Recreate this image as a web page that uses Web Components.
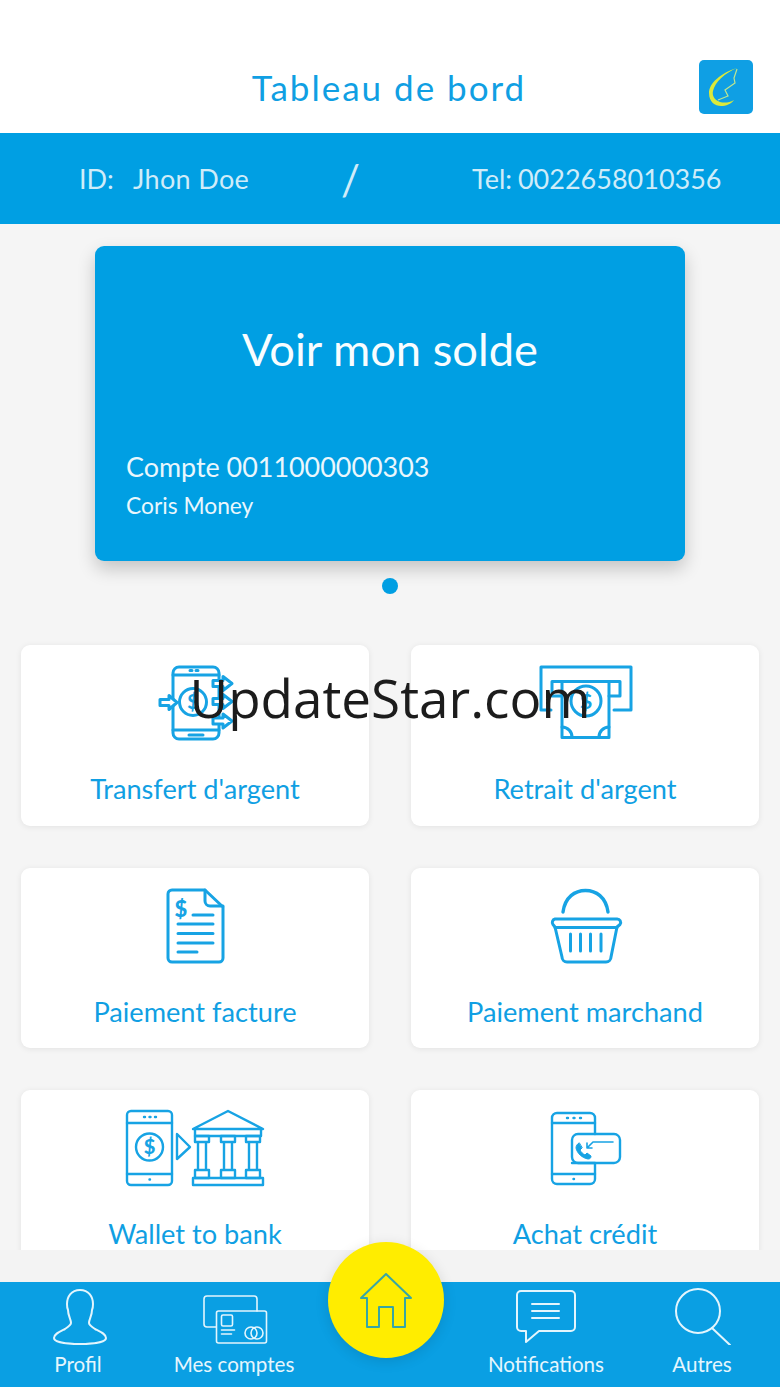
<!DOCTYPE html>
<html lang="fr">
<head>
<meta charset="utf-8">
<title>Tableau de bord</title>
<style>
html,body{margin:0;padding:0;background:#f5f5f5;}
body{font-family:Lato,"Open Sans",sans-serif;}
svg.ic{display:block;width:160px;height:80px;fill:none;stroke:#17a3e4;stroke-width:3;stroke-linecap:round;stroke-linejoin:round;}
svg.ic text{font-family:Lato,sans-serif;font-weight:900;text-anchor:middle;fill:#17a3e4;stroke:none;}
svg.tb{display:block;fill:none;stroke:#e3f5fd;stroke-width:2;stroke-linecap:round;stroke-linejoin:round;}
</style>
</head>
<body>
<app-shell>
  <app-header title="Tableau de bord"></app-header>
  <id-band name="Jhon Doe" tel="0022658010356"></id-band>
  <main-area>
    <balance-card account="Compte 0011000000303" wallet="Coris Money" heading="Voir mon solde"></balance-card>
    <action-grid>
      <action-tile label="Transfert d'argent">
        <svg class="ic" viewBox="0 0 160 80">
          <rect x="58" y="5" width="46" height="72" rx="6"/>
          <path d="M58 13H104M58 68H104M75 8.500h2M81 8.500h2M74 73h14"/>
          <circle cx="78" cy="40" r="13.500"/>
          <text x="78" y="47" font-size="20">$</text>
          <path d="M45 37.500h9v-4l8 7-8 7v-4h-9z" fill="#fff"/>
          <path d="M98 18.500h10v-4l9 7-9 7v-4H98zM98 36.500h10v-4l9 7-9 7v-4H98zM98 56h10v-4l9 7-9 7v-4H98z" fill="#fff"/>
        </svg>
      </action-tile>
      <action-tile label="Retrait d'argent">
        <svg class="ic" viewBox="0 0 160 80">
          <path d="M46 48H36V5h90v43h-17"/>
          <path d="M57 34H47V19.500h68V34h-11"/>
          <path d="M57 19.500h47v56H57z"/>
          <circle cx="81" cy="39" r="15"/>
          <text x="81" y="46.500" font-size="21">$</text>
          <path d="M57 65a10 10 0 0 1 10 10.500M104 65a10 10 0 0 0-10 10.500"/>
        </svg>
      </action-tile>
      <action-tile label="Paiement facture">
        <svg class="ic" viewBox="0 0 160 80">
          <path d="M57 5h33l18 17v51a4 4 0 0 1-4 4H57a4 4 0 0 1-4-4V9a4 4 0 0 1 4-4z"/>
          <path d="M90 5v11a5 5 0 0 0 5 5h13"/>
          <path d="M78 30h20M63 39h35M63 48.500h35M63 58h35M63 67h19"/>
          <text x="66" y="32" font-size="22">$</text>
        </svg>
      </action-tile>
      <action-tile label="Paiement marchand">
        <svg class="ic" viewBox="0 0 160 80">
          <path d="M58 27C60 12 70 5.500 80.500 5.500S101 12 103 27" stroke-width="3.400"/>
          <path d="M50 34h62a3.500 3.500 0 0 1 3 5.500l-3 2.500-6 30a5 5 0 0 1-5 5H62a5 5 0 0 1-5-5l-7-30-2-2.500A3.500 3.500 0 0 1 50 34z"/>
          <path d="M50 42.500h62M65.500 49v17M75.500 49v17M85.500 49v17M96 49v17"/>
        </svg>
      </action-tile>
      <action-tile label="Wallet to bank">
        <svg class="ic" viewBox="0 0 160 80" style="stroke-width:2.400">
          <rect x="12" y="4" width="45" height="74" rx="4"/>
          <path d="M12 16H57M12 67H57M29 10h1M34.500 10h1M40 10h1M34.500 72.500h.5"/>
          <circle cx="34.500" cy="40" r="13.500"/>
          <text x="34.500" y="47" font-size="20">$</text>
          <path d="M62 27l13 13-13 12z"/>
          <path d="M78 22L113 4l35 18zM80 22v7h66v-7"/>
          <path d="M80 29h14v6H80zM83 35h8v28h-8zM80 63h14v8H80z"/>
          <path d="M106 29h14v6h-14zM109 35h8v28h-8zM106 63h14v8h-14z"/>
          <path d="M131 29h14v6h-14zM134 35h8v28h-8zM131 63h14v8h-14z"/>
          <path d="M78 71h70v7H78z"/>
        </svg>
      </action-tile>
      <action-tile label="Achat crédit">
        <svg class="ic" viewBox="0 0 160 80" style="stroke-width:2.400">
          <path d="M67 56H90V72a5 5 0 0 1-5 5H52a5 5 0 0 1-5-5V11a5 5 0 0 1 5-5h33a5 5 0 0 1 5 5V27"/>
          <path d="M47 16H90M47 67H90M62 11h1M68.500 11h1M75 11h1M68.500 72h.5"/>
          <rect x="67" y="27" width="48" height="29" rx="6"/>
          <path d="M74 36c-2 1-3 3-3 5 1 5 6 10 12 11 2 0 3-1 3-3l-4-3-2 2c-2-1-4-3-5-5l2-2z" fill="#17a3e4" stroke-width="1"/>
          <path d="M82 41l6-6h20M82 36v5h5" stroke-width="1.600"/>
        </svg>
      </action-tile>
    </action-grid>
  </main-area>
  <div style="height:32px;background:#f3f3f3"></div>
  <tab-bar>
    <tab-item label="Profil">
      <svg class="tb" width="60" height="58" viewBox="0 0 60 58" style="margin-left:4px">
        <path d="M30 3c-9 0-13 7-13 14 0 3 .5 5 1 6 0 6 3 9 3 13 0 2-3 4-6 6-6 3-11 5-11 9 0 4 12 6 26 6s26-2 26-6c0-4-5-6-11-9-3-2-6-4-6-6 0-4 3-7 3-13 .5-1 1-3 1-6 0-7-4-14-13-14z"/>
      </svg>
    </tab-item>
    <tab-item label="Mes comptes">
      <svg class="tb" width="66" height="52" viewBox="0 0 66 52" style="stroke-width:1.600;margin-left:2px">
        <path d="M14 34H5a3 3 0 0 1-3-3V6a3 3 0 0 1 3-3h47a3 3 0 0 1 3 3v12"/>
        <rect x="14.500" y="18" width="50" height="32" rx="2"/>
        <rect x="19.500" y="22" width="11" height="11" rx="1.500"/>
        <path d="M19.500 37h13M19.500 41h10"/>
        <circle cx="49" cy="40" r="6"/><circle cx="55" cy="40" r="6"/>
      </svg>
    </tab-item>
    <div></div>
    <tab-item label="Notifications">
      <svg class="tb" width="62" height="56" viewBox="0 0 62 56">
        <path d="M6 2h50a4 4 0 0 1 4 4v32a4 4 0 0 1-4 4H24L11 53V42H6a4 4 0 0 1-4-4V6a4 4 0 0 1 4-4z"/>
        <path d="M17 15h27M17 22h27M17 29h27"/>
      </svg>
    </tab-item>
    <tab-item label="Autres">
      <svg class="tb" width="62" height="58" viewBox="0 0 62 58">
        <circle cx="27" cy="24" r="22"/>
        <path d="M41 41l18 17" />
      </svg>
    </tab-item>
  </tab-bar>
  <home-button></home-button>
  <water-mark text="UpdateStar.com"></water-mark>
</app-shell>

<script>
(function(){
function shadow(el,html){
    let temp=document.createElement("template");
    temp.innerHTML=html;
    el.attachShadow({mode:"open"});
    el.shadowRoot.appendChild(temp.content.cloneNode(true));
}

class AppShell extends HTMLElement{
    constructor(){
        super();
        shadow(this,`<style>
        :host{display:flex;flex-direction:column;position:relative;width:780px;height:1387px;overflow:hidden;background:#f5f5f5;font-family:Lato,sans-serif;}
        </style><slot></slot>`);
    }
}

class AppHeader extends HTMLElement{
    constructor(){
        super();
        shadow(this,`<style>
        :host{display:flex;align-items:flex-end;justify-content:center;position:relative;flex:none;height:133px;box-sizing:border-box;background:#fff;}
        h1{margin:0 2px 25px 0;font:400 35px/42px Lato,sans-serif;letter-spacing:2px;color:#109fe3;}
        svg{position:absolute;left:699px;top:60px;}
        </style>
        <h1>${this.getAttribute("title")}</h1>
        <svg width="54" height="54" viewBox="0 0 54 54">
          <rect width="54" height="54" rx="5" fill="#0f9fe4"/>
          <path d="M38 8C22 13 10 23 10 33c0 9 6 13 12 13 5 0 10-2 13-6-5 3-10 3-14 2-6-2-8-7-7-11C16 22 26 13 38 8z" fill="#dbe93a"/>
          <path d="M38 9l-3 9 1 5-10 7 3 6-10 4" fill="none" stroke="#bfe58f" stroke-width="1.200"/>
        </svg>`);
    }
}

class IdBand extends HTMLElement{
    constructor(){
        super();
        shadow(this,`<style>
        :host{display:flex;align-items:center;flex:none;height:91px;padding:0 0 0 79px;box-sizing:border-box;background:#009fe3;color:#cfecf9;font:400 27px/32px Lato,sans-serif;}
        .id{width:54px;}
        .name{width:208px;letter-spacing:.35px;}
        .sl{width:131px;font-size:42px;line-height:40px;font-weight:400;}
        .tel{word-spacing:-1px;}
        </style>
        <span class="id">ID:</span><span class="name">${this.getAttribute("name")}</span><span class="sl">/</span><span class="tel">Tel: ${this.getAttribute("tel")}</span>`);
    }
}

class MainArea extends HTMLElement{
    constructor(){
        super();
        shadow(this,`<style>
        :host{display:block;flex:none;height:1026px;overflow:hidden;box-sizing:border-box;padding-top:22px;background:#f5f5f5;}
        </style><slot></slot>`);
    }
}

class BalanceCard extends HTMLElement{
    constructor(){
        super();
        shadow(this,`<style>
        :host{display:block;}
        .card{display:flex;flex-direction:column;width:590px;height:315px;margin:0 auto;box-sizing:border-box;padding:75px 31px 0;background:#009fe3;border-radius:9px;color:#fff;box-shadow:0 8px 18px rgba(0,0,0,.2);}
        h2{margin:0;font:400 45.300px/56px Lato,sans-serif;text-align:center;color:#f8fdff;}
        .acc{margin-top:72px;font-size:26.900px;line-height:36px;color:#eaf7fd;}
        .wal{margin-top:5px;font-size:22.800px;line-height:30px;color:#eaf7fd;}
        .dot{width:16px;height:16px;margin:17px auto 0;border-radius:50%;background:#009fe3;}
        </style>
        <div class="card">
          <h2>${this.getAttribute("heading")}</h2>
          <div class="acc">${this.getAttribute("account")}</div>
          <div class="wal">${this.getAttribute("wallet")}</div>
        </div>
        <div class="dot"></div>`);
    }
}

class ActionGrid extends HTMLElement{
    constructor(){
        super();
        shadow(this,`<style>
        :host{display:grid;grid-template-columns:348px 348px;column-gap:42px;row-gap:42px;padding:51px 21px 0;}
        </style><slot></slot>`);
    }
}

class ActionTile extends HTMLElement{
    constructor(){
        super();
        shadow(this,`<style>
        :host{display:flex;flex-direction:column;align-items:center;height:180.500px;box-sizing:border-box;padding-top:17px;background:#fff;border-radius:9px;box-shadow:0 1px 6px rgba(0,0,0,.08);}
        .t{margin-top:29px;font:400 27.200px/36px Lato,sans-serif;color:#109fe3;}
        </style>
        <slot></slot><div class="t">${this.getAttribute("label")}</div>`);
    }
}

class TabBar extends HTMLElement{
    constructor(){
        super();
        shadow(this,`<style>
        :host{display:grid;grid-template-columns:repeat(5,156px);flex:none;height:105px;background:#0a9fe3;}
        </style><slot></slot>`);
    }
}

class TabItem extends HTMLElement{
    constructor(){
        super();
        shadow(this,`<style>
        :host{display:flex;flex-direction:column;align-items:center;position:relative;}
        .i{display:flex;align-items:flex-end;justify-content:center;height:63px;}
        .l{font:400 20.600px/26px Lato,sans-serif;color:#e6f6fd;margin-top:6px;}
        </style>
        <div class="i"><slot></slot></div><div class="l">${this.getAttribute("label")}</div>`);
    }
}

class HomeButton extends HTMLElement{
    constructor(){
        super();
        shadow(this,`<style>
        :host{display:flex;align-items:center;justify-content:center;position:absolute;left:327.500px;top:1242px;width:116px;height:116px;border-radius:50%;background:#ffed00;box-shadow:0 3px 14px rgba(0,0,0,.12);}
        </style>
        <svg width="56" height="58" viewBox="0 0 56 58" fill="none" stroke="#38a6a5" stroke-width="2" stroke-linejoin="round">
          <path d="M28 3L3 27h6v29h12V36h14v20h12V27h6z"/>
        </svg>`);
    }
}

class WaterMark extends HTMLElement{
    constructor(){
        super();
        shadow(this,`<style>
        :host{display:block;position:absolute;left:0;top:660px;width:780px;text-align:center;font:400 53px/76px "Open Sans",sans-serif;color:#1c1c1c;}
        </style>${this.getAttribute("text")}`);
    }
}

window.customElements.define("app-shell",AppShell);
window.customElements.define("app-header",AppHeader);
window.customElements.define("id-band",IdBand);
window.customElements.define("main-area",MainArea);
window.customElements.define("balance-card",BalanceCard);
window.customElements.define("action-grid",ActionGrid);
window.customElements.define("action-tile",ActionTile);
window.customElements.define("tab-bar",TabBar);
window.customElements.define("tab-item",TabItem);
window.customElements.define("home-button",HomeButton);
window.customElements.define("water-mark",WaterMark);
}());
</script>
</body>
</html>
